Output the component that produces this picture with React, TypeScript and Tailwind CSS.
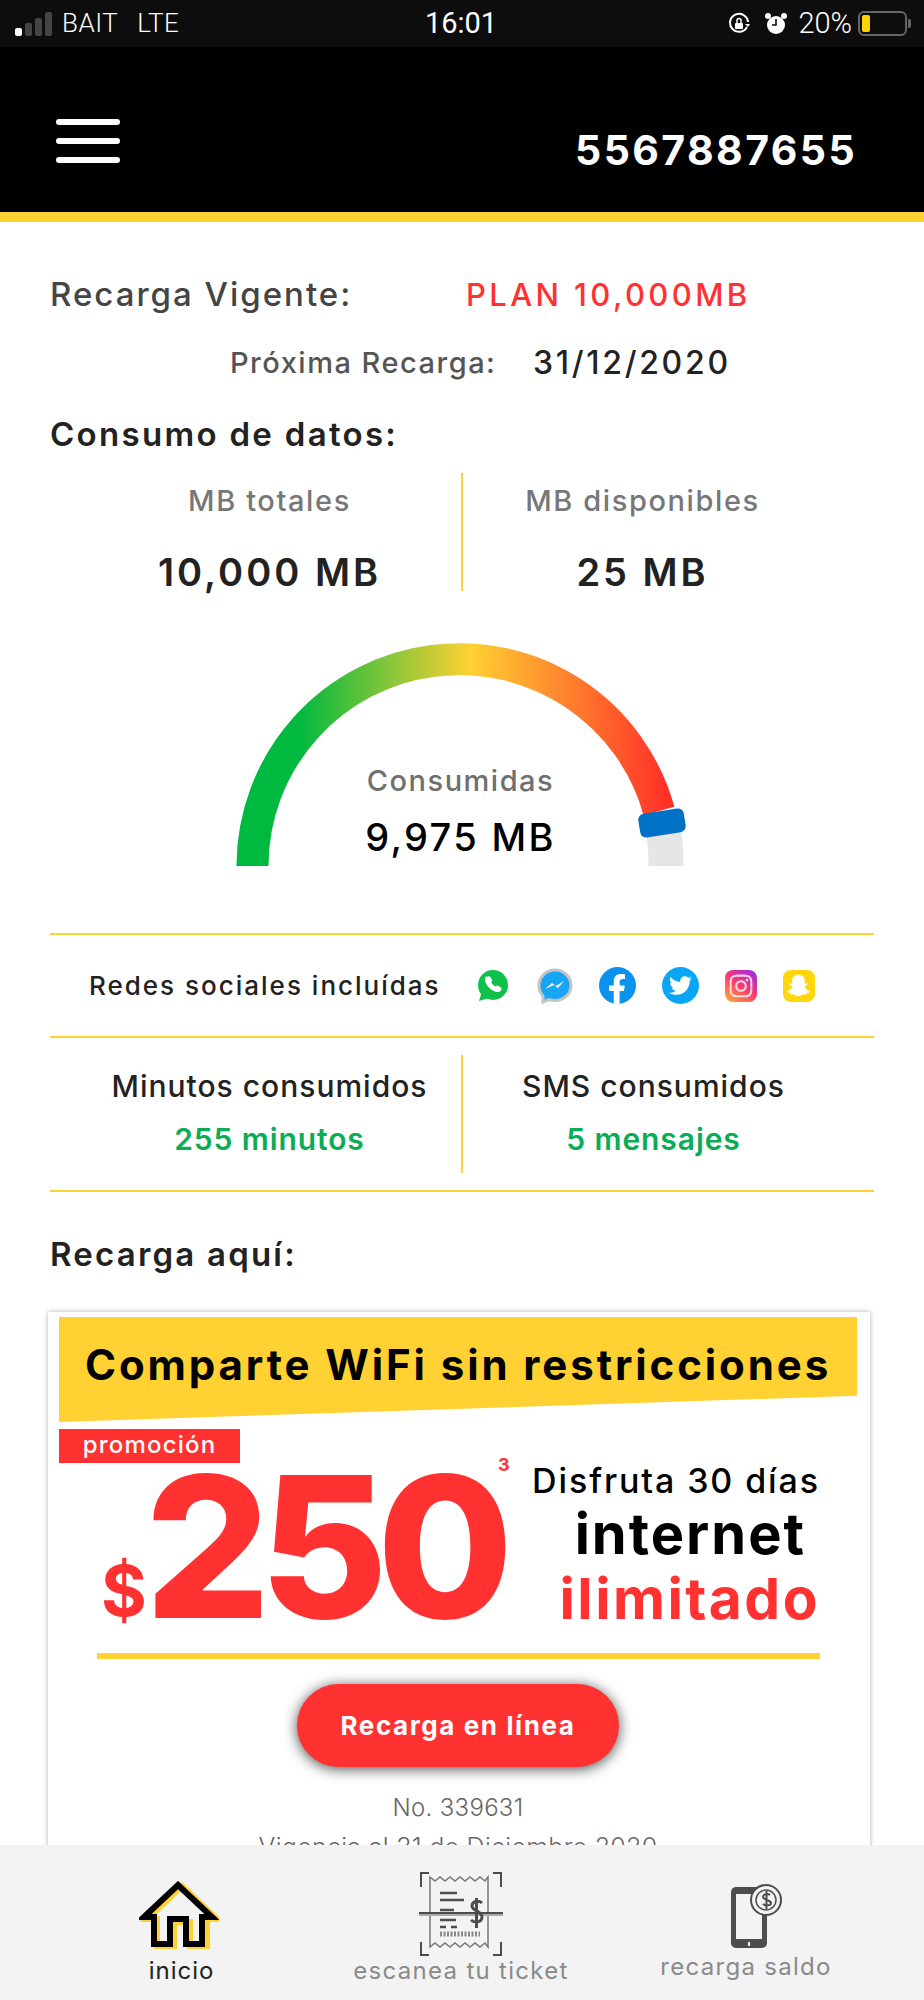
import React from 'react';
import { FaFacebookF, FaTwitter, FaInstagram, FaSnapchatGhost } from 'react-icons/fa';

const StatusBar: React.FC = () => (
  <div className="h-[47px] bg-[#0d0d0d] grid grid-cols-[1fr_auto_1fr] items-center pl-[15px] pr-[13px] text-white font-['Roboto',sans-serif] font-light shrink-0">
    <div className="flex items-center text-[26px]">
      <div className="flex items-end gap-[3px] h-[24px] mt-[1px]">
        <div className="w-[7px] h-[8px] bg-white rounded-[2px]" />
        <div className="w-[7px] h-[13px] bg-[#444] rounded-[2px]" />
        <div className="w-[7px] h-[18px] bg-[#444] rounded-[2px]" />
        <div className="w-[7px] h-[24px] bg-[#444] rounded-[2px]" />
      </div>
      <span className="ml-[10px] tracking-[0.5px]">BAIT</span>
      <span className="ml-[19px] tracking-[0.5px]">LTE</span>
    </div>
    <span className="text-center font-normal text-[29px] pr-[4px]">16:01</span>
    <div className="flex items-center justify-end text-[29px]">
      <svg viewBox="0 0 24 24" className="w-[24px] h-[24px]" fill="none" stroke="white" strokeWidth="2">
        <path d="M20 15a9 9 0 1 1 1-5" />
        <path d="M18 12l3 3 2-3" fill="white" stroke="none" />
        <rect x="8" y="11" width="8" height="6" rx="1" fill="white" stroke="none" />
        <path d="M10 11V8.500a2 2 0 0 1 4 0V11" strokeWidth="1.5" />
      </svg>
      <svg viewBox="0 0 24 24" className="w-[24px] h-[24px] ml-[13px]" fill="white">
        <circle cx="12" cy="13" r="9" />
        <circle cx="4" cy="4" r="3" />
        <circle cx="20" cy="4" r="3" />
        <path d="M12 7v6H8" stroke="#0d0d0d" strokeWidth="1.6" fill="none" />
      </svg>
      <span className="ml-[10px]">20%</span>
      <div className="ml-[6px] w-[49px] h-[25px] rounded-[6px] border-2 border-[#666] p-[2px] flex">
        <div className="w-[8px] bg-[#ffd400] rounded-[2px]" />
      </div>
      <div className="w-[3px] h-[9px] bg-[#666] rounded-r-[2px] ml-[1px]" />
    </div>
  </div>
);

const Header: React.FC = () => (
  <div className="h-[175px] bg-black border-b-[10px] border-[#ffd133] flex items-center justify-between pl-[56px] pr-[67px] shrink-0">
    <div className="flex flex-col gap-[13px] w-[64px] mt-[23px]">
      <div className="h-[6px] bg-white rounded-full" />
      <div className="h-[6px] bg-white rounded-full" />
      <div className="h-[6px] bg-white rounded-full" />
    </div>
    <span className="text-white text-[41px] font-bold tracking-[2.400px] mt-[42px]">5567887655</span>
  </div>
);

const Gauge: React.FC = () => (
  <div className="relative w-[450px] h-[228px] ml-[186px] mt-[48px]">
    <svg viewBox="0 0 450 228" className="w-[450px] h-[228px]">
      <defs>
        <linearGradient id="gaugeFill" gradientUnits="userSpaceOnUse" x1="0" y1="0" x2="450" y2="0">
          <stop offset="0.14" stopColor="#00b93f" />
          <stop offset="0.52" stopColor="#ffd133" />
          <stop offset="0.96" stopColor="#ff3028" />
        </linearGradient>
      </defs>
      <path d="M430 227V225A207 207 0 0 0 426 184" fill="none" stroke="#e6e6e6" strokeWidth="35" />
      <path d="M16.500 227V225A207 207 0 0 1 423 172" fill="none" stroke="url(#gaugeFill)" strokeWidth="32" />
      <rect x="403" y="172" width="46" height="24" rx="6" fill="#0071c5" transform="rotate(-9 426 184)" />
    </svg>
    <div className="absolute left-0 right-0 top-[125px] text-center pr-[1px]">
      <div className="text-[29px] tracking-[1.500px] font-medium text-[#6f6f6f] leading-[34px]">Consumidas</div>
      <div className="text-[38px] tracking-[2.300px] font-medium text-black leading-[44px] mt-[17px]">9,975 MB</div>
    </div>
  </div>
);

const WhatsappIcon: React.FC = () => (
  <svg viewBox="0 0 36 36" className="w-[36px] h-[36px]">
    <circle cx="18" cy="17" r="15" fill="#0fc14a" />
    <path d="M7 23l-3 10 10-3z" fill="#0fc14a" />
    <path d="M12 9c1-1 3-1 3.500 0l1.500 3c.3.7 0 1.500-.8 2 .8 2 2.500 3.700 4.500 4.500.5-.8 1.300-1.100 2-.8l3 1.500c1 .5 1 2.500 0 3.500-1.500 1.500-4 1.800-7 .3-3.500-1.800-6-4.300-7.800-7.800-1.500-3-1.200-5.700.3-7.200z" fill="white" />
  </svg>
);

const MessengerIcon: React.FC = () => (
  <svg viewBox="0 0 36 36" className="w-[36px] h-[36px]">
    <path d="M18 2C9 2 2 9 2 17.500c0 4.500 1.800 8 4 10.500v6l6-2.500c2 .7 4 1 6 1 9 0 16-6.500 16-15S27 2 18 2z" fill="#19a5f5" stroke="#c4c4c4" strokeWidth="3" />
    <path d="M8 21l7-6 4 3 8-5-6 7-4-3z" fill="white" />
  </svg>
);

const SocialIcons: React.FC = () => (
  <div className="flex items-center gap-[26px] ml-[34px]">
    <WhatsappIcon />
    <MessengerIcon />
    <div className="w-[37px] h-[37px] rounded-full bg-[#0a93ee] text-white flex items-end justify-center text-[30px] overflow-hidden">
      <FaFacebookF />
    </div>
    <div className="w-[37px] h-[37px] rounded-full bg-[#0aa5f5] text-white flex items-center justify-center text-[23px]">
      <FaTwitter />
    </div>
    <div className="w-[32px] h-[32px] rounded-[8px] bg-[linear-gradient(35deg,#ffb13a,#ff3a6e_50%,#b52ccb_85%,#4d58d8)] text-white/80 flex items-center justify-center text-[26px]">
      <FaInstagram />
    </div>
    <div className="w-[32px] h-[32px] rounded-[8px] bg-[#ffd60a] text-white flex items-center justify-center text-[23px]">
      <FaSnapchatGhost />
    </div>
  </div>
);

const PromoCard: React.FC = () => (
  <div className="mt-[38px] ml-[-2px] mr-[4px] bg-white shadow-[0_0_5px_rgba(0,0,0,0.3)] pt-[5px] pl-[11px] pr-[13px] pb-[30px]">
    <div className="h-[105px] bg-[#ffd133] [clip-path:polygon(0_0,100%_0,100%_75%,0_100%)] pt-[23px] text-center text-[42px] font-bold text-black tracking-[2.900px] leading-[50px] whitespace-nowrap">
      Comparte WiFi sin restricciones
    </div>
    <div className="mt-[7px] w-[181px] h-[34px] bg-[#ff3131] text-white text-[24px] tracking-[1.200px] leading-[32px] text-center font-medium">
      promoción
    </div>
    <div className="flex h-[175px] mt-[-2px]">
      <div className="relative flex items-end pl-[42px] w-[460px] text-[#ff3131]">
        <span className="text-[70px] font-bold leading-[1] mb-[10px]">$</span>
        <span className="text-[197px] font-extrabold leading-[170px] tracking-[-11px] mb-[4px] ml-[-2px]">250</span>
        <span className="absolute left-[439px] top-[-10px] text-[18px] font-bold">3</span>
      </div>
      <div className="flex-1 text-right pr-[37px] leading-none whitespace-nowrap">
        <div className="text-[34px] tracking-[1.900px] font-medium text-black mt-[3px]">Disfruta 30 días</div>
        <div className="text-[56px] tracking-[2px] font-bold text-black mt-[8px] pr-[14px]">internet</div>
        <div className="text-[57px] tracking-[2.400px] font-bold text-[#ff3131] mt-[8px]">ilimitado</div>
      </div>
    </div>
    <div className="h-[6px] bg-[#ffd133] ml-[38px] mr-[37px] mt-[17px]" />
    <div className="mt-[25px] mx-auto w-[322px] h-[83px] rounded-full bg-[#ff3131] text-white text-[26px] font-bold tracking-[1.600px] flex items-center justify-center shadow-[0_2px_14px_rgba(0,0,0,0.7)]">
      Recarga en línea
    </div>
    <div className="mt-[23px] text-center text-[24px] tracking-[0.3px] font-light text-[#666]">No. 339631</div>
    <div className="mt-[3px] text-center text-[25px] tracking-[0.3px] font-light text-[#666] whitespace-nowrap">Vigencia al 31 de Diciembre 2020</div>
  </div>
);

const HomeIcon: React.FC = () => (
  <svg viewBox="0 0 80 68" className="w-[80px] h-[68px] mr-[5px]" fill="none" strokeWidth="6">
    <path d="M5 37L40 4l35 33H65v28H48V40H32v25H15V37z" stroke="#ffd133" transform="translate(3 1)" />
    <path d="M5 36L39 4l34 32H63v27H47V38H31v25H15V36z" stroke="#000" />
  </svg>
);

const TicketIcon: React.FC = () => (
  <svg viewBox="0 0 84 84" className="w-[84px] h-[84px]" fill="none" stroke="#4d4d4d" strokeWidth="2">
    <path d="M10 1H2v14M74 1h8v14M2 70v13h8M82 70v13h-8" />
    <path d="M11 5v70l5-4 5 4 5-4 5 4 5-4 5 4 5-4 5 4 5-4 5 4 5-4 3 4V5l-3 4-5-4-5 4-5-4-5 4-5-4-5 4-5-4-5 4-5-4-5 4z" strokeWidth="1.5" stroke="#777" />
    <path d="M21 21h17M21 28h24M21 38h14M21 48h16M21 55h6M32 55h6" strokeWidth="2.500" />
    <rect x="0" y="40" width="84" height="4" fill="#aaa" stroke="none" />
    <path d="M0 41h84" />
    <path d="M21 62h40" strokeWidth="5" strokeDasharray="2 1.500" stroke="#888" />
    <path d="M63 31c-3-3-10-2-10 3s10 5 10 11-8 6-11 3M57.500 26v30" strokeWidth="3" />
  </svg>
);

const PhoneIcon: React.FC = () => (
  <svg viewBox="0 0 54 66" className="w-[54px] h-[66px] ml-[22px]">
    <rect x="1" y="5" width="36" height="61" rx="5" fill="#4d4d4d" />
    <rect x="6" y="12" width="26" height="45" fill="#f3f3f3" />
    <rect x="18" y="60" width="2" height="4" fill="#f3f3f3" />
    <circle cx="36" cy="18" r="15" fill="#f3f3f3" stroke="#4d4d4d" strokeWidth="2" />
    <circle cx="36" cy="18" r="10" fill="none" stroke="#4d4d4d" strokeWidth="1.5" />
    <path d="M40 13c-2-2-7-1-7 2s8 3 8 6-6 3-8 1M36.500 9v18" fill="none" stroke="#4d4d4d" strokeWidth="2" />
  </svg>
);

const BottomNav: React.FC = () => (
  <div className="h-[155px] bg-[#f3f3f3] flex shrink-0">
    <div className="w-[362px] flex flex-col items-center pt-[36px]">
      <HomeIcon />
      <span className="text-[24px] text-[#222] mt-[9px] tracking-[1px] leading-[26px] ml-[1px]">inicio</span>
    </div>
    <div className="w-[198px] flex flex-col items-center pt-[27px]">
      <TicketIcon />
      <span className="text-[24px] text-[#8a8a8a] mt-[2px] tracking-[1.300px] leading-[26px] whitespace-nowrap">escanea tu ticket</span>
    </div>
    <div className="flex-1 flex flex-col items-center pt-[37px] pl-[8px]">
      <PhoneIcon />
      <span className="text-[24px] text-[#8a8a8a] mt-[6px] tracking-[1.300px] leading-[26px] whitespace-nowrap">recarga saldo</span>
    </div>
  </div>
);

export default function App() {
  return (
    <div className="w-[924px] h-[2000px] flex flex-col bg-white overflow-hidden font-['Inter',sans-serif]">
      <StatusBar />
      <Header />
      <main className="flex-1 overflow-hidden px-[50px]">
        <div className="flex items-center mt-[53px] h-[40px] whitespace-nowrap">
          <span className="text-[33px] tracking-[2px] font-medium text-[#444] w-[416px]">Recarga Vigente:</span>
          <span className="text-[31px] tracking-[3.400px] font-medium text-[#ff3131]">PLAN 10,000MB</span>
        </div>
        <div className="flex items-center mt-[28px] h-[40px] pl-[180px] whitespace-nowrap">
          <span className="text-[29px] tracking-[1.500px] font-medium text-[#555] w-[303px]">Próxima Recarga:</span>
          <span className="text-[32px] tracking-[2.700px] font-medium text-[#222]">31/12/2020</span>
        </div>
        <h2 className="text-[33px] tracking-[2.300px] font-semibold text-[#222] mt-[31px] leading-[40px]">Consumo de datos:</h2>
        <div className="flex mt-[19px] h-[118px]">
          <div className="w-[411px] text-center pl-[28px] whitespace-nowrap">
            <div className="text-[29px] tracking-[1.600px] font-medium text-[#777] leading-[40px] mt-[8px]">MB totales</div>
            <div className="text-[38px] tracking-[3px] font-semibold text-[#222] leading-[44px] mt-[29px]">10,000 MB</div>
          </div>
          <div className="w-[2px] bg-[#ffd133]" />
          <div className="flex-1 text-center pr-[52px] whitespace-nowrap">
            <div className="text-[29px] tracking-[1.600px] font-medium text-[#777] leading-[40px] mt-[8px]">MB disponibles</div>
            <div className="text-[38px] tracking-[3px] font-semibold text-[#222] leading-[44px] mt-[29px]">25 MB</div>
          </div>
        </div>
        <Gauge />
        <div className="h-[2px] bg-[#ffd133] mt-[66px]" />
        <div className="flex items-center h-[101px] pl-[39px]">
          <span className="text-[26px] tracking-[2px] font-medium text-[#222] whitespace-nowrap">Redes sociales incluídas</span>
          <SocialIcons />
        </div>
        <div className="h-[2px] bg-[#ffd133]" />
        <div className="flex mt-[17px] h-[118px]">
          <div className="w-[411px] text-center pl-[28px] whitespace-nowrap">
            <div className="text-[30px] tracking-[1px] font-medium text-[#222] leading-[40px] mt-[11px]">Minutos consumidos</div>
            <div className="text-[30px] tracking-[0.900px] font-semibold text-[#0aad55] leading-[40px] mt-[13px]">255 minutos</div>
          </div>
          <div className="w-[2px] bg-[#ffd133]" />
          <div className="flex-1 text-center pr-[30px] whitespace-nowrap">
            <div className="text-[30px] tracking-[1px] font-medium text-[#222] leading-[40px] mt-[11px]">SMS consumidos</div>
            <div className="text-[30px] tracking-[0.900px] font-semibold text-[#0aad55] leading-[40px] mt-[13px]">5 mensajes</div>
          </div>
        </div>
        <div className="h-[2px] bg-[#ffd133] mt-[17px]" />
        <h2 className="text-[33px] tracking-[2.200px] font-semibold text-[#222] mt-[42px] leading-[40px]">Recarga aquí:</h2>
        <PromoCard />
      </main>
      <BottomNav />
    </div>
  );
}
